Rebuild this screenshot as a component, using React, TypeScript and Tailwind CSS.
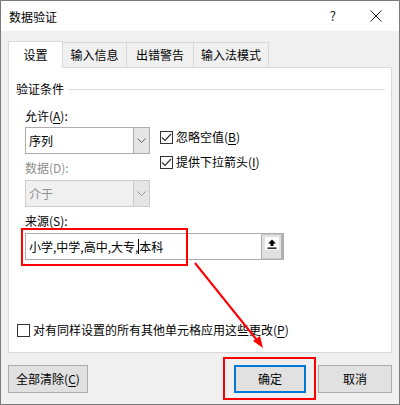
import React from 'react';

const FONT = 'font-["Noto_Sans_CJK_SC","Microsoft_YaHei",sans-serif]';

function Chevron({ color = '#606060' }: { color?: string }) {
  return (
    <svg width="9" height="5" viewBox="0 0 9 5">
      <path d="M0.5 0.5 L4.5 4.5 L8.5 0.5" fill="none" stroke={color} strokeWidth="1" />
    </svg>
  );
}

function Check({ checked }: { checked: boolean }) {
  return (
    <span className="w-[13px] h-[13px] border border-[#333333] bg-white flex items-center justify-center shrink-0">
      {checked && (
        <svg width="11" height="11" viewBox="0 0 11 11">
          <path d="M1 5.5 L4 8.5 L10 2" fill="none" stroke="#333333" strokeWidth="1.2" />
        </svg>
      )}
    </span>
  );
}

function Combo({ value, disabled }: { value: string; disabled?: boolean }) {
  return (
    <div
      className={`w-[125px] h-[27px] border flex shrink-0 ${
        disabled ? 'border-[#cccccc] bg-[#f0f0f0]' : 'border-[#adadad] bg-white'
      }`}
    >
      <div className={`flex-1 flex items-center pl-[3px] leading-[14px] ${disabled ? 'text-[#8f8f8f]' : 'text-black'}`}>
        {value}
      </div>
      <div
        className={`w-[16px] border-l flex items-center justify-center ${
          disabled ? 'border-[#cccccc] bg-[#e5e5e5]' : 'border-[#adadad] bg-[#e5e5e5]'
        }`}
      >
        <Chevron color={disabled ? '#8f8f8f' : '#606060'} />
      </div>
    </div>
  );
}

function U({ children }: { children: React.ReactNode }) {
  return <span className="underline underline-offset-2">{children}</span>;
}

export default function App() {
  return (
    <div className={`${FONT} text-[12px] text-black w-[400px] h-[405px] border border-[#7a7a7a] bg-[#f0f0f0] relative flex flex-col`}>
      {/* title bar */}
      <div className="h-[30px] bg-white flex items-center justify-between pl-[8px]">
        <span className="text-[12px] leading-[14px] mt-[1px]">数据验证</span>
        <div className="flex items-center gap-[34px] mr-[17px]">
          <span className="text-[13px] leading-[14px] text-[#222]">?</span>
          <svg width="12" height="12" viewBox="0 0 12 12">
            <path d="M0.5 0.5 L11.5 11.5 M11.5 0.5 L0.5 11.5" stroke="#222" strokeWidth="1" />
          </svg>
        </div>
      </div>

      <div className="flex-1 px-[7px] pt-[10px]">
        {/* tabs */}
        <div className="flex items-end h-[27px] -mb-px">
          <div className="relative z-10 w-[55px] h-[27px] bg-white border-l border-t border-r border-[#d9d9d9] flex items-center justify-center leading-[14px]">
            设置
          </div>
          <div className="-ml-px w-[65px] h-[26px] border border-[#d9d9d9] flex items-center justify-center leading-[14px]">
            输入信息
          </div>
          <div className="-ml-px w-[68px] h-[26px] border border-[#d9d9d9] flex items-center justify-center leading-[14px]">
            出错警告
          </div>
          <div className="-ml-px w-[76px] h-[26px] border border-[#d9d9d9] flex items-center justify-center leading-[14px]">
            输入法模式
          </div>
        </div>

        {/* panel */}
        <div className="h-[286px] bg-white border border-[#d9d9d9] pt-[14px]">
          <div className="h-[14px] flex items-center pl-[7px] pr-[6px]">
            <span className="leading-[14px]">验证条件</span>
            <div className="flex-1 h-px bg-[#dcdcdc] ml-[5px]" />
          </div>

          <div className="pl-[16px]">
            <div className="mt-[13px] h-[14px] leading-[14px]">
              允许(<U>A</U>):
            </div>
            <div className="flex items-start h-[27px] mt-[4px]">
              <Combo value="序列" />
              <div className="ml-[10px] pt-[3px] flex flex-col gap-[11px]">
                <div className="flex items-center h-[14px] gap-[3px] leading-[14px]">
                  <Check checked />
                  <span>忽略空值(<U>B</U>)</span>
                </div>
                <div className="flex items-center h-[14px] gap-[3px] leading-[14px]">
                  <Check checked />
                  <span>提供下拉箭头(<U>I</U>)</span>
                </div>
              </div>
            </div>

            <div className="mt-[7px] h-[14px] leading-[14px] text-[#8f8f8f]">数据(D):</div>
            <div className="mt-[5px]">
              <Combo value="介于" disabled />
            </div>

            <div className="mt-[7px] h-[14px] leading-[14px]">
              来源(<U>S</U>):
            </div>
            <div className="mt-[5px] w-[259px] h-[27px] border border-[#adadad] bg-white flex">
              <div className="flex-1 flex items-center pl-[3px] leading-[14px]">
                <span>小学,中学,高中,大专,</span>
                <span className="w-px h-[15px] bg-black" />
                <span>本科</span>
              </div>
              <div className="w-[22px] border-l border-[#adadad] border-r-2 border-r-[#b0b0b0] border-y border-y-[#c8c8c8] bg-[#e1e1e1] flex justify-center pt-[2px]">
                <div className="w-[14px] h-[13px] bg-white flex items-center justify-center">
                  <svg width="10" height="10" viewBox="0 0 10 10">
                    <path d="M5 0.5 L9 4.5 L6.5 4.5 L6.5 7 L3.5 7 L3.5 4.5 L1 4.5 Z" fill="#000" />
                    <rect x="0.5" y="8.5" width="9" height="1.3" fill="#000" />
                  </svg>
                </div>
              </div>
            </div>
          </div>

          <div className="mt-[63px] pl-[8px] flex items-center h-[14px] gap-[3px] leading-[14px]">
            <Check checked={false} />
            <span>对有同样设置的所有其他单元格应用这些更改(<U>P</U>)</span>
          </div>
        </div>

        {/* buttons */}
        <div className="flex justify-between mt-[12px]">
          <button className="w-[80px] h-[28px] border border-[#adadad] bg-[#e1e1e1] leading-[14px]">
            全部清除(<U>C</U>)
          </button>
          <div className="flex gap-[12px]">
            <button className="w-[72px] h-[28px] border-2 border-[#0078d7] bg-[#e1e1e1] leading-[14px]">确定</button>
            <button className="w-[74px] h-[28px] border border-[#adadad] bg-[#e1e1e1] leading-[14px]">取消</button>
          </div>
        </div>
      </div>

      {/* annotations */}
      <div className="absolute left-[20px] top-[227px] w-[167px] h-[38px] border-2 border-[#ff0000] pointer-events-none" />
      <div className="absolute left-[222px] top-[356px] w-[93px] h-[43px] border-2 border-[#ff0000] pointer-events-none" />
      <svg className="absolute left-0 top-0 pointer-events-none" width="398" height="403" viewBox="0 0 398 403">
        <line x1="194" y1="262" x2="259" y2="343" stroke="#ff0000" strokeWidth="2" />
        <path d="M262 347 L252 340 L259 335 Z" fill="#ff0000" />
      </svg>
    </div>
  );
}
